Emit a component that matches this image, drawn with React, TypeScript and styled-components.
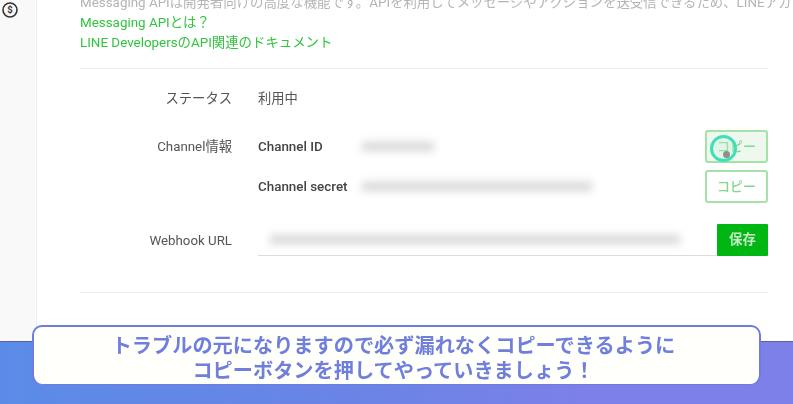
import React from 'react';
import styled, { createGlobalStyle } from 'styled-components';

const Global = createGlobalStyle`
    html, body { margin: 0; padding: 0; background: #fff; }
    body { font-family: "Roboto", "Noto Sans CJK JP", sans-serif; }
`;

const Screen = styled.div`
    position: relative;
    width: 793px;
    height: 404px;
    overflow: hidden;
    display: flex;
    flex-direction: column;
    background: #fff;
`;

const Body = styled.div`
    display: flex;
    height: 341px;
    flex: none;
`;

const Sidebar = styled.aside`
    width: 37px;
    flex: none;
    padding: 1px 0 0 1px;
    box-sizing: border-box;
    background: #f9f9f9;
    border-right: 1px solid #eeeeee;
`;

const Main = styled.main`
    flex: 1;
    min-width: 0;
    padding: 0 25px 0 43px;
    overflow: hidden;
`;

const Intro = styled.div`
    display: flow-root;
    height: 69px;
    border-bottom: 1px solid #ececec;
    box-sizing: border-box;
`;

const IntroText = styled.p`
    margin: -7px -40px 0 0;
    height: 20px;
    font-size: 13.4px;
    line-height: 20px;
    color: #b4b4b4;
    white-space: nowrap;
    filter: blur(0.4px);
`;

const DocLink = styled.a`
    display: block;
    font-size: 13.4px;
    line-height: 20px;
    color: #2fc53f;
    filter: blur(0.4px);
`;

const Form = styled.div`
    height: 224px;
    padding-top: 20px;
    box-sizing: border-box;
    border-bottom: 1px solid #ececec;
    display: flex;
    flex-direction: column;
`;

const Row = styled.div<{ $height: number }>`
    display: grid;
    grid-template-columns: 152px 1fr;
    column-gap: 26px;
    height: ${p => p.$height}px;
`;

const Label = styled.div<{ $top?: number }>`
    text-align: right;
    font-size: 13.3px;
    line-height: 20px;
    color: #555;
    padding-top: ${p => p.$top ?? 0}px;
    filter: blur(0.4px);
`;

const Value = styled.div`
    font-size: 13.3px;
    line-height: 20px;
    color: #555;
    filter: blur(0.4px);
`;

const InfoList = styled.div`
    display: flex;
    flex-direction: column;
    gap: 7px;
`;

const InfoRow = styled.div`
    display: flex;
    align-items: center;
    height: 33px;
`;

const InfoName = styled.div`
    width: 104px;
    flex: none;
    font-size: 13.4px;
    font-weight: 500;
    color: #444;
    filter: blur(0.4px);
`;

const Masked = styled.div<{ $width: number }>`
    width: ${p => p.$width}px;
    height: 9px;
    background: #d6d6d6;
    filter: blur(4.5px);
`;

const CopyButton = styled.button<{ $pressed?: boolean }>`
    position: relative;
    margin-left: auto;
    width: 63px;
    height: 33px;
    padding: 0;
    box-sizing: border-box;
    border: 2px solid #a4e2a8;
    border-radius: 3px;
    background: ${p => (p.$pressed ? '#eef8ee' : '#fff')};
    color: #85d68c;
    font: 500 13px/1 "Roboto", "Noto Sans CJK JP", sans-serif;
    filter: blur(0.4px);
`;

const ClickRing = styled.span`
    position: absolute;
    left: 3px;
    top: 3px;
    width: 27px;
    height: 27px;
    box-sizing: border-box;
    border: 3px solid #3fe0b5;
    border-radius: 50%;
    background: rgba(200, 240, 220, 0.35);
`;

const CursorDot = styled.span`
    position: absolute;
    left: 10px;
    top: 13px;
    width: 7px;
    height: 7px;
    border-radius: 50%;
    background: #8f8f8f;
`;

const UrlField = styled.div`
    display: flex;
    height: 32px;
    align-items: stretch;
`;

const UrlInput = styled.div`
    flex: 1;
    display: flex;
    align-items: center;
    padding-left: 12px;
    border-bottom: 1px solid #dcdcdc;
`;

const SaveButton = styled.button`
    width: 51px;
    flex: none;
    padding: 0;
    border: 0;
    border-radius: 1px;
    background: #00b612;
    color: #c4e9c6;
    font: 700 13.4px/1 "Roboto", "Noto Sans CJK JP", sans-serif;
    filter: blur(0.3px);
`;

const Band = styled.div`
    flex: 1;
    background: linear-gradient(90deg, #5b8be8 0%, #6a84e6 45%, #7d80e8 75%, #7d80e8 100%);
    border-top: 1px solid #5f5f9f;
`;

const Caption = styled.div`
    position: absolute;
    left: 32px;
    top: 325px;
    width: 729px;
    height: 60px;
    box-sizing: border-box;
    padding: 7px 6px 0 0;
    border: 2px solid #6e7bdf;
    border-bottom-width: 1px;
    border-radius: 10px;
    background: #fffffb;
    color: #707fdc;
    text-align: center;
    font-size: 20.2px;
    font-weight: 700;
    line-height: 25px;
    filter: blur(0.3px);
`;

const DollarIcon = () => (
    <svg width="18" height="18" viewBox="0 0 18 18" fill="none">
        <circle cx="9" cy="9" r="7" stroke="#333" strokeWidth="1.6" />
        <text x="9" y="12.3" textAnchor="middle" fontSize="9.5" fontWeight="700" fill="#333" fontFamily="Roboto, sans-serif">$</text>
    </svg>
);

export default function App() {
    return (
        <Screen>
            <Global />
            <Body>
                <Sidebar>
                    <DollarIcon />
                </Sidebar>
                <Main>
                    <Intro>
                        <IntroText>Messaging APIは開発者向けの高度な機能です。APIを利用してメッセージやアクションを送受信できるため、LINEアカウント</IntroText>
                        <DocLink>Messaging APIとは？</DocLink>
                        <DocLink>LINE DevelopersのAPI関連のドキュメント</DocLink>
                    </Intro>
                    <Form>
                        <Row $height={41}>
                            <Label>ステータス</Label>
                            <Value>利用中</Value>
                        </Row>
                        <Row $height={94}>
                            <Label $top={7}>Channel情報</Label>
                            <InfoList>
                                <InfoRow>
                                    <InfoName>Channel ID</InfoName>
                                    <Masked $width={72} />
                                    <CopyButton $pressed>
                                        コピー
                                        <ClickRing><CursorDot /></ClickRing>
                                    </CopyButton>
                                </InfoRow>
                                <InfoRow>
                                    <InfoName>Channel secret</InfoName>
                                    <Masked $width={230} />
                                    <CopyButton>コピー</CopyButton>
                                </InfoRow>
                            </InfoList>
                        </Row>
                        <Row $height={32}>
                            <Label $top={7}>Webhook URL</Label>
                            <UrlField>
                                <UrlInput>
                                    <Masked $width={410} />
                                </UrlInput>
                                <SaveButton>保存</SaveButton>
                            </UrlField>
                        </Row>
                    </Form>
                </Main>
            </Body>
            <Band />
            <Caption>
                トラブルの元になりますので必ず漏れなくコピーできるように
                <br />
                コピーボタンを押してやっていきましょう！
            </Caption>
        </Screen>
    );
}
